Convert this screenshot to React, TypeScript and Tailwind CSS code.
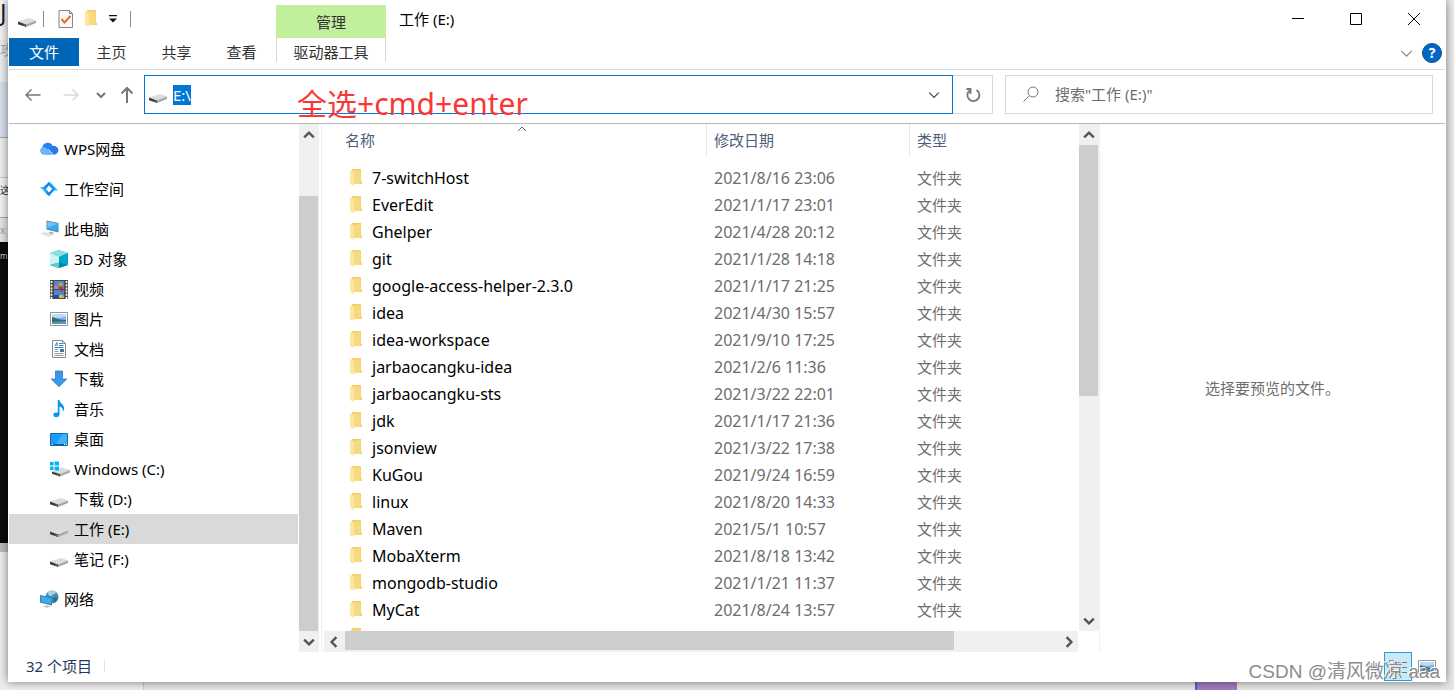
import React, { useEffect, useRef, useState } from 'react';

const files = [
  { name: '7-switchHost', date: '2021/8/16 23:06' },
  { name: 'EverEdit', date: '2021/1/17 23:01' },
  { name: 'Ghelper', date: '2021/4/28 20:12' },
  { name: 'git', date: '2021/1/28 14:18' },
  { name: 'google-access-helper-2.3.0', date: '2021/1/17 21:25' },
  { name: 'idea', date: '2021/4/30 15:57' },
  { name: 'idea-workspace', date: '2021/9/10 17:25' },
  { name: 'jarbaocangku-idea', date: '2021/2/6 11:36' },
  { name: 'jarbaocangku-sts', date: '2021/3/22 22:01' },
  { name: 'jdk', date: '2021/1/17 21:36' },
  { name: 'jsonview', date: '2021/3/22 17:38' },
  { name: 'KuGou', date: '2021/9/24 16:59' },
  { name: 'linux', date: '2021/8/20 14:33' },
  { name: 'Maven', date: '2021/5/1 10:57' },
  { name: 'MobaXterm', date: '2021/8/18 13:42' },
  { name: 'mongodb-studio', date: '2021/1/21 11:37' },
  { name: 'MyCat', date: '2021/8/24 13:57' },
];

function DriveIcon() {
  return (
    <svg width="18" height="18" viewBox="0 -2 18 18" aria-hidden="true">
      <path d="M0 9.5 11 6l7 2.5-10 4z" fill="#dcdcde" />
      <path d="M8 12.5 18 8.5V11L8 15z" fill="#a6a6a9" />
      <path d="M0 9.5 8 12.5V15L0 12.3z" fill="#3b3d3c" />
      <path d="M5.5 12.5 7 13v1l-1.5-.5z" fill="#3fc45a" />
    </svg>
  );
}

function WindowsDriveIcon() {
  return (
    <svg width="20" height="18" viewBox="0 0 20 18" aria-hidden="true">
      <path d="M2 11.5 12 7.5l8 2.5-10 4z" fill="#dcdcde" />
      <path d="M10 14 20 10v2.500L10 16.500z" fill="#a9a9ac" />
      <path d="M2 11.5 10 14v2.500L2 13.800z" fill="#3b3d3c" />
      <path d="M7 14 8.500 14.500v1l-1.500-.5z" fill="#3fc45a" />
      <path d="M0 2h3.6v3.5H0zM4.6 1.5H9v4H4.6zM0 6.5h3.6V10H0zM4.6 6.5H9v4H4.6z" fill="#00b7f0" />
    </svg>
  );
}

function FolderIcon() {
  return (
    <svg width="14" height="18" viewBox="0 0 14 18" aria-hidden="true">
      <path d="M3 0h9v12.500h1V15H4z" fill="#f3cf69" />
      <path d="M5 1.500h6.500V15H5z" fill="#f7d97f" />
      <path d="M1 .5 5 3v14l-4-2z" fill="#fde6a0" />
    </svg>
  );
}

function CloudIcon() {
  return (
    <svg width="19" height="18" viewBox="0 0 19 18" aria-hidden="true">
      <path d="M4 14.5A4 4 0 0 1 2.5 7 5.3 5.3 0 0 1 12.6 6a4.2 4.2 0 0 1 2 8.5z" fill="#1f82f5" />
      <path d="M2.6 7.2C6.5 6.6 9 10 13 14.5H4A4 4 0 0 1 2.6 7.2z" fill="#6cb4ff" />
      <path d="M8.5 8.8C11 6 14.5 4.6 17.3 7.6a4.2 4.2 0 0 1-2.7 6.9h-1z" fill="#2f76e8" />
      <path d="m8.2 9.2 5.2 5.3" stroke="#fff" strokeWidth=".7" />
    </svg>
  );
}

function WorkspaceIcon() {
  return (
    <svg width="18" height="18" viewBox="0 0 18 18" fill="none" aria-hidden="true">
      <path d="M0 7h4.500l6 5.500L9 16 7 14.500z" fill="#1fc8ee" />
      <path d="M3.500 7.500 9 2l3 3-5.500 5z" fill="#1684fc" />
      <path d="M18 10.500h-4.500l-6-5.500L9 2l2.500 1.500z" fill="#1fc0f4" />
      <path d="M14.500 10 9 16l-3-3 5.500-5z" fill="#1684fc" />
      <path d="M3.500 7.500 9 2l5.500 7L9 16z" fill="#1684fc" />
      <path d="m9 5.500 3.300 3.500L9 12.500 5.700 9z" fill="#fff" />
    </svg>
  );
}

function ComputerIcon() {
  return (
    <svg width="19" height="18" viewBox="0 0 19 18" aria-hidden="true">
      <path d="m6.500.5 12 2.500v9.500L6.500 9.500z" fill="#5f7e92" />
      <path d="m7.300 1.600 10.400 2.200v7.500L7.300 8.700z" fill="#3aa9f5" />
      <path d="m7.300 1.600 10.400 2.200-10.400 4z" fill="#6cc5fa" />
      <path d="m9.500 11.500 4.500 1-1.500 2-4-1z" fill="#a9b4bc" />
      <path d="m0 13.500 5-1.500 8 2.700-4.500 2.200z" fill="#d0d4da" />
      <path d="m1.500 13.600 7.500 2.500M4 12.700l7 2.300" stroke="#fff" strokeWidth=".6" />
    </svg>
  );
}

function CubeIcon() {
  return (
    <svg width="18" height="18" viewBox="0 0 18 18" aria-hidden="true">
      <path d="m0 3 9-3 9 3v12l-9 3-9-3z" fill="#51c8d9" />
      <path d="m0 3 9-3 9 3-9 4z" fill="#86dfe5" />
      <path d="M0 3l9 4v8l-9 0z" fill="#d0f4f3" />
      <path d="M9 7l9-4v12l-9-2z" fill="#00a6cc" />
      <path d="m0 15 9-2.500L18 15l-9 3z" fill="#07879c" />
      <path d="M0 15l9-2.500V18z" fill="#5bcfd7" />
    </svg>
  );
}

function VideoIcon() {
  return (
    <svg width="18" height="19" viewBox="0 0 18 19" aria-hidden="true">
      <path d="M0 0h18v19H0z" fill="#4a4a4a" />
      <path d="M4 1h10v8H4zM4 10h10v8H4z" fill="#4d86dd" />
      <path d="M4 6h4v3H4z" fill="#e36c9d" />
      <circle cx="10.500" cy="4.500" r="2.300" fill="#b7a832" />
      <path d="M9 6.500h4V9H9z" fill="#c53a35" />
      <circle cx="11.500" cy="11" r="1.200" fill="#d7322f" />
      <path d="M9 15h4l1 3H9z" fill="#d9c13c" />
      <path d="M4 15h5v3H4z" fill="#28489f" />
      <path d="M1.500 1v18M16.500 1v18" stroke="#fff" strokeWidth="1.600" strokeDasharray="2 1.200" />
    </svg>
  );
}

function PictureIcon() {
  return (
    <svg width="18" height="18" viewBox="0 0 18 18" aria-hidden="true">
      <path d="M.5 2.500h17v13H.5z" fill="#fff" stroke="#969696" />
      <path d="M2 4h14v10H2z" fill="#7db8ee" />
      <path d="M2 4h14v2.500L9 8 2 7z" fill="#b9dcf8" />
      <path d="M2 7.500c3 0 5 2 14 2.500v2H2z" fill="#3c6f5a" />
      <path d="M2 12l14-1v3H2z" fill="#5b93bd" />
    </svg>
  );
}

function DocumentIcon() {
  return (
    <svg width="18" height="18" viewBox="0 0 18 18" fill="none" aria-hidden="true">
      <path d="M2.500.5h10l3 3v14h-13z" fill="#fff" stroke="#8a8a8a" />
      <path d="M12.500.5v3h3" stroke="#8a8a8a" />
      <path d="m5 6 2-3.500V6M9 3.500h3M9 5.500h4.500M4.500 7.500h9" stroke="#2a86cc" />
      <path d="M4.500 9.500h4M4.500 11.500h4M4.500 13.500h9M4.500 15.500h9" stroke="#999" />
      <path d="M10 9h4v3h-4z" fill="#3c7aa8" />
    </svg>
  );
}

function DownloadIcon() {
  return (
    <svg width="18" height="18" viewBox="0 0 18 18" aria-hidden="true">
      <path d="M5.500 1h7v8h4.300L9 16.800 1.200 9h4.300z" fill="#3a97ea" stroke="#2c7cc7" strokeWidth=".8" />
    </svg>
  );
}

function MusicIcon() {
  return (
    <svg width="18" height="18" viewBox="0 0 18 18" aria-hidden="true">
      <ellipse cx="6.300" cy="14.700" rx="3" ry="2.300" fill="#0b96ee" />
      <path d="M7.800 0h1.700c.3 3.500 5 4.500 4.700 8.500 0 1.500-.8 2.500-1.400 3.200.6-3-1-4.500-3.300-5.200V15H7.800z" fill="#0b96ee" />
    </svg>
  );
}

function DesktopIcon() {
  return (
    <svg width="18" height="18" viewBox="0 0 18 18" aria-hidden="true">
      <path d="M.5 3.500h17v12H.5z" fill="#189cf5" stroke="#0a6cb4" />
      <path d="M6 14 13 4h4v10z" fill="#45b1fa" />
      <path d="M1 14h16v1.500H1z" fill="#0b5f9d" />
      <path d="M2 14.500h1M14 14.500h1M16 14.500h1" stroke="#fff" />
    </svg>
  );
}

function NetworkIcon() {
  return (
    <svg width="19" height="18" viewBox="0 0 19 18" aria-hidden="true">
      <circle cx="12" cy="7" r="6.500" fill="#4a8fb4" />
      <path d="M8 2.500c2-2 6-2.500 8 0-1 2-3 1-4 3-2 1-4 0-4-3z" fill="#a8d5e6" />
      <path d="M13 8c2-1 4 0 5-1-.3 3-2 5-4 6z" fill="#2c6c92" />
      <path d="m0 5 12 2.500v8L0 12.500z" fill="#47778f" />
      <path d="m.8 6 10.400 2.200v6L.8 11.800z" fill="#36aef8" />
      <path d="M3 16.500 7 15l4 1.500-4 1.500z" fill="#c5cbd0" />
    </svg>
  );
}

const navGroups = [
  [{ label: 'WPS网盘', icon: CloudIcon }],
  [{ label: '工作空间', icon: WorkspaceIcon }],
  [
    { label: '此电脑', icon: ComputerIcon },
    { label: '3D 对象', icon: CubeIcon, child: true },
    { label: '视频', icon: VideoIcon, child: true },
    { label: '图片', icon: PictureIcon, child: true },
    { label: '文档', icon: DocumentIcon, child: true },
    { label: '下载', icon: DownloadIcon, child: true },
    { label: '音乐', icon: MusicIcon, child: true },
    { label: '桌面', icon: DesktopIcon, child: true },
    { label: 'Windows (C:)', icon: WindowsDriveIcon, child: true },
    { label: '下载 (D:)', icon: DriveIcon, child: true },
    { label: '工作 (E:)', icon: DriveIcon, child: true },
    { label: '笔记 (F:)', icon: DriveIcon, child: true },
  ],
  [{ label: '网络', icon: NetworkIcon }],
];

const chevrons = {
  up: 'M1 7l4-4 4 4',
  down: 'M1 3l4 4 4-4',
  left: 'M7 1 3 5l4 4',
  right: 'M3 1l4 4-4 4',
};

function Chevron({ dir, size = 10, width = 1 }: { dir: keyof typeof chevrons; size?: number; width?: number }) {
  return (
    <svg width={size} height={size} viewBox="0 0 10 10" fill="none" stroke="currentColor" strokeWidth={width} aria-hidden="true">
      <path d={chevrons[dir]} />
    </svg>
  );
}

function ScrollButton({ dir, label }: { dir: keyof typeof chevrons; label: string }) {
  return (
    <button type="button" aria-label={label} className="flex h-[21px] w-[19px] shrink-0 items-center justify-center text-[#555]">
      <Chevron dir={dir} size={12} width={2} />
    </button>
  );
}

function VerticalScrollbar({ before, thumb }: { before: number; thumb: number }) {
  return (
    <div className="flex h-full w-5 shrink-0 flex-col bg-[#f0f0f0]">
      <ScrollButton dir="up" label="向上滚动" />
      <div className="w-[19px] flex-1">
        <div style={{ height: `${before}%` }} />
        <div className="bg-[#cdcdcd]" style={{ height: `${thumb}%` }} />
      </div>
      <ScrollButton dir="down" label="向下滚动" />
    </div>
  );
}

function TitleBar() {
  return (
    <div className="flex h-[38px]">
      <div className="flex w-[267px] shrink-0 items-center pl-[9px]">
        <DriveIcon />
        <span className="mr-[14px] ml-[7px] h-4 w-px bg-[#8a8a8a]" />
        <button type="button" aria-label="属性">
          <svg width="16" height="18" viewBox="0 0 16 18" fill="none" aria-hidden="true">
            <path d="M1 .5h10.500l3 3v14H1z" fill="#fafafa" stroke="#858585" />
            <path d="M11.500.5v3h3" stroke="#858585" />
            <path d="m3.500 9 3 3.500 6-6.500" stroke="#f06a1d" strokeWidth="2" />
          </svg>
        </button>
        <button type="button" aria-label="新建文件夹" className="ml-[10px]">
          <FolderIcon />
        </button>
        <button type="button" aria-label="自定义快速访问工具栏" className="ml-[11px]">
          <svg width="8" height="8" viewBox="0 0 8 8" aria-hidden="true">
            <path d="M0 0h8v1.300H0zM0 3.500h8L4 7.500z" fill="#111" />
          </svg>
        </button>
        <span className="ml-[13px] h-4 w-px bg-[#8a8a8a]" />
      </div>
      <div className="mt-[5px] flex w-[110px] shrink-0 items-center justify-center bg-[#c1ef9c] text-[#333]">管理</div>
      <h1 className="flex flex-1 items-center pl-[13px] text-black">工作 (E:)</h1>
      <div className="flex pr-[2px] text-black">
        <button type="button" aria-label="最小化" className="flex w-[58px] items-center justify-center">
          <svg width="12" height="12" viewBox="0 0 12 12" stroke="currentColor" aria-hidden="true"><path d="M0 5.500h12" /></svg>
        </button>
        <button type="button" aria-label="最大化" className="flex w-[58px] items-center justify-center">
          <svg width="12" height="12" viewBox="0 0 12 12" fill="none" stroke="currentColor" aria-hidden="true"><path d="M.5.5h11v11H.5z" /></svg>
        </button>
        <button type="button" aria-label="关闭" className="flex w-[58px] items-center justify-center">
          <svg width="12" height="12" viewBox="0 0 12 12" stroke="currentColor" aria-hidden="true"><path d="m0 0 12 12M12 0 0 12" /></svg>
        </button>
      </div>
    </div>
  );
}

function RibbonTabs() {
  return (
    <div className="flex h-8 items-start border-b border-[#dadbdc] text-[#333]">
      <button type="button" className="h-7 w-[70px] bg-[#0067b8] text-white">文件</button>
      {['主页', '共享', '查看'].map(tab => (
        <button key={tab} type="button" className="h-7 w-[65px]">{tab}</button>
      ))}
      <button type="button" className="ml-[2px] h-6 w-[110px] border-x border-[#d5d5d5]">
        <span className="block pt-1">驱动器工具</span>
      </button>
      <div className="flex h-[30px] flex-1 items-center justify-end gap-[9px] pr-[3px]">
        <button type="button" aria-label="展开功能区" className="text-[#888]">
          <Chevron dir="down" size={13} />
        </button>
        <button type="button" aria-label="帮助" className="flex h-5 w-5 items-center justify-center rounded-full border border-[#0a4f8c] bg-[#0067c5] text-sm font-bold text-white">
          ?
        </button>
      </div>
    </div>
  );
}

function AddressBar() {
  const [path, setPath] = useState('E:\\');
  const [query, setQuery] = useState('');
  const input = useRef<HTMLInputElement>(null);

  useEffect(() => {
    input.current?.focus();
    input.current?.select();
  }, []);

  return (
    <div className="relative flex h-[54px] items-start border-b border-[#b9b9b9] pt-[5px] pr-3">
      <div className="flex h-[39px] w-[135px] shrink-0 items-center pl-4 text-[#777]">
        <button type="button" aria-label="后退">
          <svg width="16" height="16" viewBox="0 0 16 16" fill="none" stroke="currentColor" strokeWidth="1.500" aria-hidden="true"><path d="M15.500 8H1M6.500 2.500 1 8l5.500 5.500" /></svg>
        </button>
        <button type="button" aria-label="前进" className="ml-[22px] text-[#d8d8d8]">
          <svg width="16" height="16" viewBox="0 0 16 16" fill="none" stroke="currentColor" strokeWidth="1.500" aria-hidden="true"><path d="M.5 8H15M9.500 2.500 15 8l-5.500 5.500" /></svg>
        </button>
        <button type="button" aria-label="最近位置" className="ml-[17px]">
          <Chevron dir="down" size={10} width={2} />
        </button>
        <button type="button" aria-label="上移" className="ml-[13px]">
          <svg width="16" height="18" viewBox="0 0 16 18" fill="none" stroke="currentColor" strokeWidth="2" aria-hidden="true"><path d="M8 17V2M2.500 7.500 8 2l5.500 5.500" /></svg>
        </button>
      </div>
      <div className="flex h-[39px] min-w-0 flex-1 items-center border border-[#0078d7] pl-1">
        <DriveIcon />
        <input
          ref={input}
          aria-label="地址"
          value={path}
          onChange={e => setPath(e.target.value)}
          className="ml-[6px] min-w-0 flex-1 caret-transparent outline-none selection:bg-[#0078d7] selection:text-white"
        />
        <button type="button" aria-label="以前的位置" className="mr-3 text-[#444]">
          <Chevron dir="down" size={12} />
        </button>
      </div>
      <button type="button" aria-label="刷新" className="flex h-[39px] w-10 shrink-0 items-center justify-center border border-l-0 border-[#d9d9d9] text-[#777]">
        <svg width="16" height="16" viewBox="0 0 16 16" fill="none" stroke="currentColor" strokeWidth="1.800" aria-hidden="true">
          <path d="M5 3.200A6 6 0 1 0 11.500 3M5.500 7V2H1.500" />
        </svg>
      </button>
      <label className="ml-3 flex h-[39px] w-[428px] items-center border border-[#d9d9d9] pb-px pl-[17px] text-[#777]">
        <svg width="16" height="16" viewBox="0 0 16 16" fill="none" stroke="currentColor" aria-hidden="true">
          <circle cx="10" cy="6" r="5" />
          <path d="M6.500 9.500.5 15.500" />
        </svg>
        <input
          aria-label="搜索"
          value={query}
          onChange={e => setQuery(e.target.value)}
          placeholder={'搜索"工作 (E:)"'}
          className="ml-4 min-w-0 flex-1 outline-none placeholder:text-[#6d6d6d]"
        />
      </label>
      <p className="pointer-events-none absolute top-[14px] left-72 text-[30px] leading-10 whitespace-nowrap text-[#fb3636]">
        全选+cmd+enter
      </p>
    </div>
  );
}

function SideNav() {
  const [active, setActive] = useState('工作 (E:)');

  return (
    <nav className="flex w-[289px] shrink-0 flex-col gap-[10px] overflow-hidden pt-[10px] text-black">
      {navGroups.map(group => (
        <ul key={group[0].label}>
          {group.map(({ label, icon: Icon, child }: { label: string; icon: () => React.ReactElement; child?: boolean }) => (
            <li key={label}>
              <button
                type="button"
                onClick={() => setActive(label)}
                className={`flex h-[30px] w-full items-center gap-[5px] text-left ${child ? 'pl-[41px]' : 'pl-[31px]'} ${
                  active === label ? 'bg-[#d9d9d9]' : ''
                }`}
              >
                <span className="w-[19px]">
                  <Icon />
                </span>
                {label}
              </button>
            </li>
          ))}
        </ul>
      ))}
    </nav>
  );
}

function FileList() {
  return (
    <div className="flex min-h-0 min-w-0 flex-1 flex-col border-l border-[#f0f0f0]">
      <div className="flex min-h-0 flex-1">
        <div className="min-w-0 flex-1 overflow-hidden">
          <table className="w-full table-fixed text-left">
            <colgroup>
              <col />
              <col className="w-[203px]" />
              <col className="w-[170px]" />
            </colgroup>
            <thead>
              <tr className="h-10 align-top text-[#4c607a]">
                <th className="p-0 font-normal">
                  <button type="button" className="relative flex h-8 w-full items-center pl-[23px]">
                    名称
                    <span className="absolute inset-x-0 top-0 flex justify-center pl-4 text-[#666]">
                      <Chevron dir="up" size={10} />
                    </span>
                  </button>
                </th>
                <th className="p-0 font-normal">
                  <button type="button" className="flex h-8 w-full items-center border-l border-[#e5e5e5] pl-[7px]">修改日期</button>
                </th>
                <th className="p-0 font-normal">
                  <button type="button" className="flex h-8 w-full items-center border-l border-[#e5e5e5] pl-[7px]">类型</button>
                </th>
              </tr>
            </thead>
            <tbody className="text-[#6d6d6d]">
              {files.map(file => (
                <tr key={file.name} className="h-[27px]">
                  <td className="p-0">
                    <div className="flex items-center gap-[9px] pl-[27px] text-base leading-5 text-black">
                      <FolderIcon />
                      {file.name}
                    </div>
                  </td>
                  <td className="p-0 pl-2 text-base leading-5">{file.date}</td>
                  <td className="p-0 pl-2">文件夹</td>
                </tr>
              ))}
              <tr className="h-[27px]">
                <td className="p-0 pl-[27px]">
                  <FolderIcon />
                </td>
              </tr>
            </tbody>
          </table>
        </div>
        <VerticalScrollbar before={0} thumb={54} />
      </div>
      <div className="mr-[21px] ml-[2px] flex h-[21px] bg-[#f0f0f0]">
        <ScrollButton dir="left" label="向左滚动" />
        <div className="flex-1 px-[2px]">
          <div className="h-[19px] w-[85.5%] bg-[#cdcdcd]" />
        </div>
        <ScrollButton dir="right" label="向右滚动" />
      </div>
    </div>
  );
}

function StatusBar() {
  return (
    <footer className="flex h-[30px] items-start pl-[17px] text-[#1e395b]">
      <span className="pt-1">32 个项目</span>
      <span className="mt-2 ml-3 h-3 w-px bg-[#e3e3e3]" />
      <div className="ml-auto flex items-center gap-[6px] pr-[9px]">
        <button type="button" aria-label="详细信息" className="flex h-[29px] w-7 items-center justify-center border border-[#26a0da] bg-[#cbe8f6]">
          <svg width="18" height="14" viewBox="0 0 18 14" fill="none" aria-hidden="true">
            <path d="M.5.5h4v4h-4zM.5 9.500h4v4h-4z" fill="#fff" stroke="#8a8a8a" />
            <path d="M7 2.500h4.500M13 2.500h5M7 7.500h4.500M13 7.500h5M7 12.500h4.500M13 12.500h5" stroke="#6b7a85" />
          </svg>
        </button>
        <button type="button" aria-label="大缩略图">
          <PictureIcon />
        </button>
      </div>
    </footer>
  );
}

// Slices of the windows that sit behind the explorer
function Backdrop() {
  return (
    <div className="flex w-2 shrink-0 flex-col overflow-hidden bg-[#eee] whitespace-nowrap" aria-hidden="true">
      <div className="h-10 bg-[#f3f3f3] text-2xl leading-6 text-[#1c1c3a]">J</div>
      <div className="h-[42px] bg-[#ededed] text-sm leading-5 text-[#aaa]">攻</div>
      <div className="h-14 border-b border-[#aaa] bg-[#d9e0ec]" />
      <div className="h-10 border-b border-[#ccc] bg-[#efefef]" />
      <div className="h-10 border-b border-[#aaa] bg-[#f3f3f3] text-[10px] leading-6 text-[#333]">这</div>
      <div className="h-6 bg-[#e6e6e6] text-[10px] leading-6 text-[#999]">x</div>
      <div className="h-[301px] bg-[#0b0b0b] text-[8px] leading-7 text-[#ccc]">m</div>
      <div className="h-[9px] bg-[#bbb]" />
    </div>
  );
}

export default function App() {
  return (
    <div className="relative flex h-screen flex-col overflow-hidden bg-[#e6e6e6] font-['Noto_Sans','Noto_Sans_CJK_SC',sans-serif] text-[15px] leading-5">
      <div className="flex min-h-0 flex-1">
        <Backdrop />
        <div className="z-10 flex min-w-0 flex-1 flex-col bg-white px-px shadow-[0_0_9px_rgba(0,0,0,0.5)]">
          <TitleBar />
          <RibbonTabs />
          <AddressBar />
          <div className="flex min-h-0 flex-1">
            <SideNav />
            <div className="mr-[2px] ml-px">
              <VerticalScrollbar before={10.5} thumb={89.5} />
            </div>
            <FileList />
            <aside className="flex w-[346px] shrink-0 items-center justify-center border-l border-[#f0f0f0] text-[#6d6d6d]">
              选择要预览的文件。
            </aside>
          </div>
          <StatusBar />
        </div>
        <div className="w-2 shrink-0 bg-[#ececec]" />
      </div>
      <div className="flex h-2 shrink-0" aria-hidden="true">
        <div className="w-36 border-r border-[#9fdcdc] bg-[#eee]" />
        <div className="flex-1" />
        <div className="mr-[217px] w-[42px] border-l-2 border-[#4a6ca8] bg-[#a57bc2]" />
      </div>
      <div className="pointer-events-none absolute right-[14px] bottom-1 z-20 font-['Liberation_Sans','Noto_Sans_CJK_SC',sans-serif] text-[19px] leading-7 text-[#8c8c8c] [text-shadow:-1px_-1px_0_#fff]">
        CSDN @清风微凉 aaa
      </div>
    </div>
  );
}
